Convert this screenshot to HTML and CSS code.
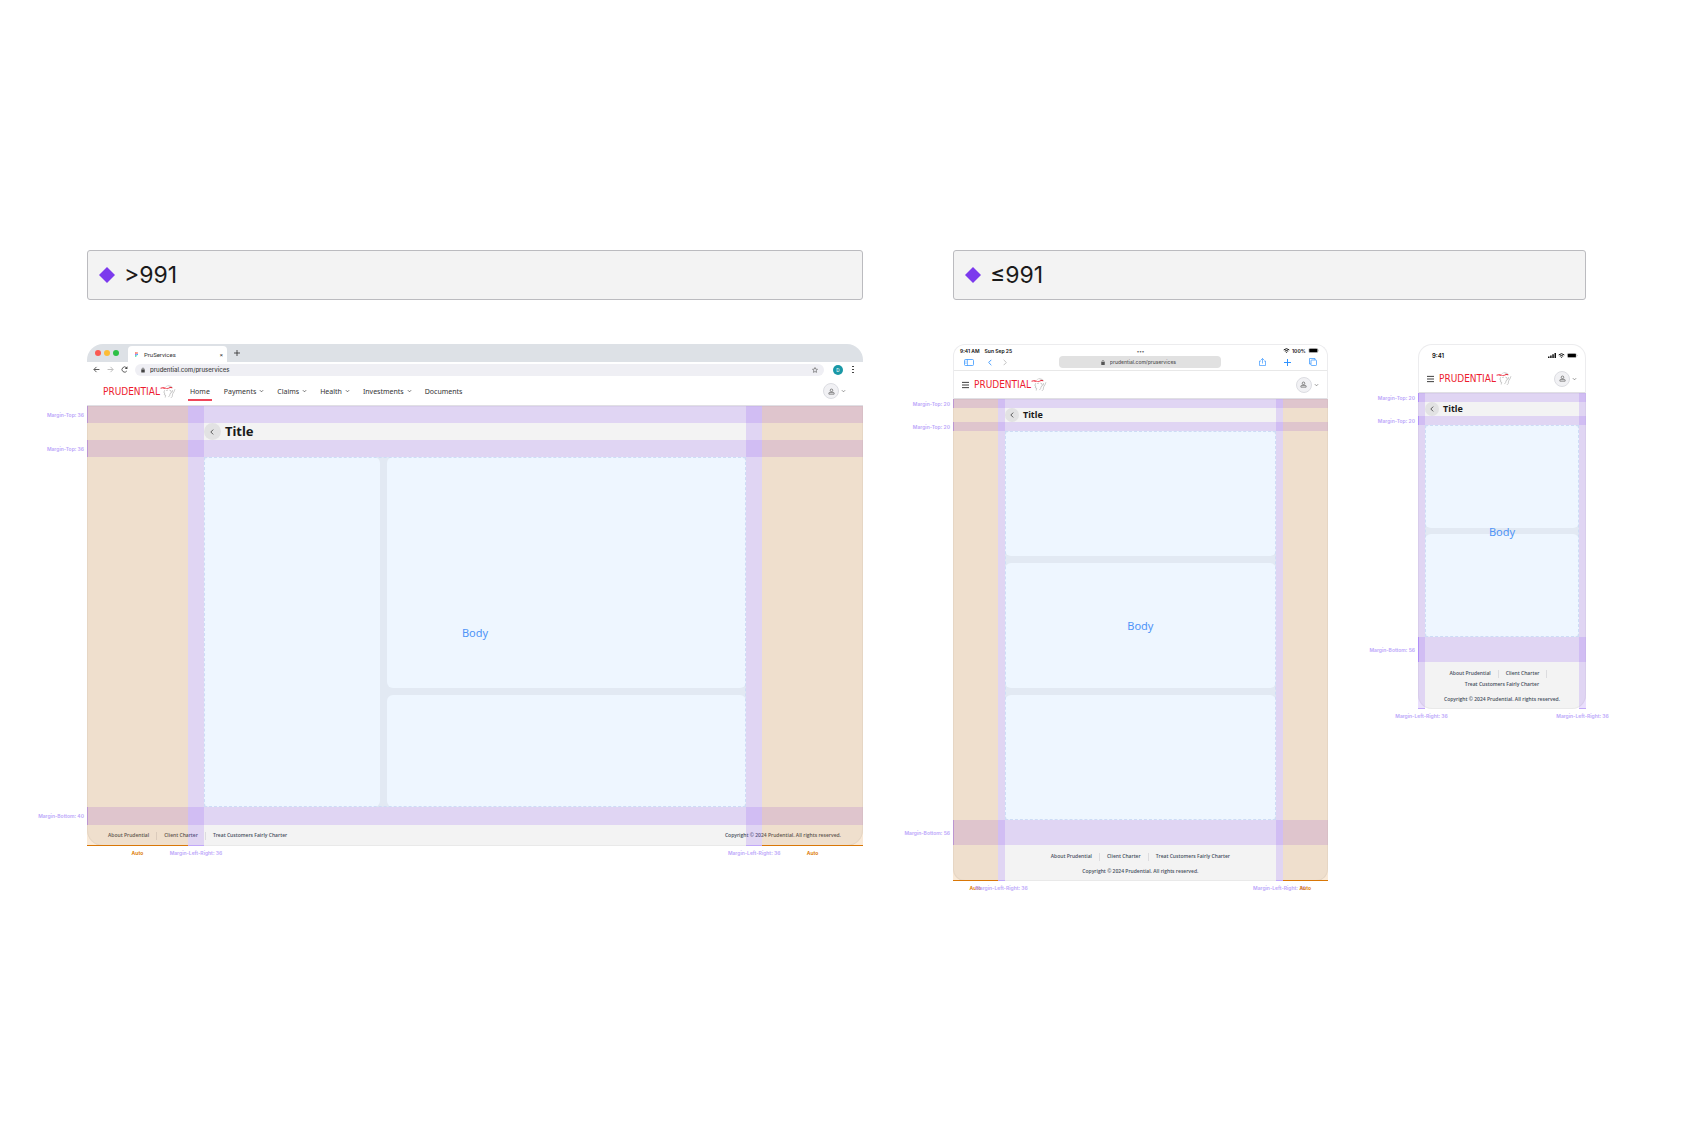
FILE: index.html
```html
<!DOCTYPE html>
<html lang="en">
<head>
  <meta charset="UTF-8">
  <meta name="viewport" content="width=device-width, initial-scale=1.0">
  <title>PruServices page layout</title>
  <link rel="stylesheet" href="styles.css">
</head>
<body>
  <!-- Shared icons -->
  <svg class="sprite" aria-hidden="true">
    <symbol id="chevron" viewBox="0 0 6 4"><path d="M1 1l2 2 2-2" fill="none" stroke="currentColor" stroke-width=".8"/></symbol>
    <symbol id="left" viewBox="0 0 6 10"><path d="M5 1L1 5l4 4" fill="none" stroke="currentColor" stroke-width="1.3"/></symbol>
    <symbol id="arrow" viewBox="0 0 12 12"><path d="M11 6H2M6 1.5L1.5 6 6 10.5" fill="none" stroke="currentColor" stroke-width="1.5"/></symbol>
    <symbol id="lock" viewBox="0 0 8 10"><path d="M2 5V3a2 2 0 0 1 4 0v2" fill="none" stroke="currentColor" stroke-width="1.2"/><rect x=".5" y="4" width="7" height="6" rx="1" fill="currentColor"/></symbol>
    <symbol id="user" viewBox="0 0 12 12"><circle cx="6" cy="4" r="2.2" fill="none" stroke="currentColor" stroke-width="1.3"/><path d="M1.5 10.5V9q0-1.5 1.5-1.5h6q1.5 0 1.5 1.5v1.5z" fill="none" stroke="currentColor" stroke-width="1.3"/></symbol>
    <symbol id="plus" viewBox="0 0 10 10"><path d="M5 0v10M0 5h10" stroke="currentColor" stroke-width="1.4"/></symbol>
    <symbol id="menu" viewBox="0 0 8 8"><path d="M0 1h8M0 4h8M0 7h8" stroke="#222" stroke-width="1"/></symbol>
    <symbol id="wifi" viewBox="0 0 12 9"><path d="M1 3.5q5-4.5 10 0M3 5.8q3-2.6 6 0" fill="none" stroke="#111" stroke-width="1.8"/><path d="M4.5 7.2q1.5-1 3 0L6 9z" fill="#111"/></symbol>
    <symbol id="battery" viewBox="0 0 24 11"><rect x=".5" y=".5" width="20" height="10" rx="3" fill="none" stroke="#999"/><rect x="1.5" y="1.5" width="18" height="8" rx="2" fill="#000"/><path d="M22 4v3q1-.5 1-1.500t-1-1.500" fill="#999"/></symbol>
    <symbol id="signal" viewBox="0 0 16 10"><path d="M0 7h3v3H0zM4.300 5h3v5h-3zM8.600 2.500h3V10h-3zM13 0h3v10h-3z" fill="#111"/></symbol>
    <symbol id="face" viewBox="0 0 32 28">
      <path d="M0 6q6-2 11 0t10-2l4 1v2q-5-1-9 1-6-1-8 0-4-2-8 0z" fill="#ed1b2e"/>
      <path d="M11 4q4-4 9-2 5 0 6 5M17 1l5 4" fill="none" stroke="#a5a5a5" stroke-width=".8"/>
      <path d="M9 11l-2 5 2 1-1 4 3 1-1 5M12 12l4-1M19 11q5 0 4 6-4 1-3 5l-3 4M31 9q-2 7-5 10l-1 6-3 3M26 11l-1 5" fill="none" stroke="#858585" stroke-width=".9"/>
    </symbol>
    <symbol id="figma" viewBox="0 0 8 12"><path d="M4 0H2a2 2 0 0 0 0 4h2z" fill="#f24e1e"/><path d="M4 0h2a2 2 0 0 1 0 4H4z" fill="#ff7262"/><path d="M4 4H2a2 2 0 0 0 0 4h2z" fill="#a259ff"/><circle cx="6" cy="6" r="2" fill="#1abcfe"/><path d="M4 8H2a2 2 0 1 0 2 2z" fill="#0acf83"/></symbol>
  </svg>

  <main class="board">
    <section class="breakpoint">
      <h2 class="breakpoint-label"><span class="diamond"></span>&gt;991</h2>

      <div class="device desktop">
        <div class="window">
          <div class="tabbar">
            <span class="dot red"></span><span class="dot yellow"></span><span class="dot green"></span>
            <div class="tab">
              <svg class="favicon"><use href="#figma"/></svg>
              <span>PruServices</span>
              <button class="tab-close" aria-label="Close tab">×</button>
            </div>
            <button class="new-tab" aria-label="New tab"><svg width="6" height="6"><use href="#plus"/></svg></button>
          </div>
          <div class="toolbar">
            <button aria-label="Back"><svg width="7" height="7"><use href="#arrow"/></svg></button>
            <button class="faded" aria-label="Forward"><svg class="flip" width="7" height="7"><use href="#arrow"/></svg></button>
            <button aria-label="Reload"><svg width="7" height="7" viewBox="0 0 12 12"><path d="M10 8.500A4.500 4.500 0 1 1 9.500 3" fill="none" stroke="currentColor" stroke-width="1.400"/><path d="M11 .5v4.500H6.500z" fill="currentColor"/></svg></button>
            <div class="address">
              <svg width="4" height="6"><use href="#lock"/></svg>
              <input type="text" aria-label="Address" value="prudential.com/pruservices">
              <svg width="6" height="6" viewBox="0 0 12 12"><path d="M6 1l1.500 3.300 3.500.4-2.600 2.400.7 3.600L6 9l-3.100 1.700.7-3.600L1 4.700l3.500-.4z" fill="none" stroke="#555" stroke-width="1.200"/></svg>
            </div>
            <span class="profile">D</span>
            <button aria-label="Menu"><svg width="2" height="7" viewBox="0 0 2 7"><path d="M0 0h2v1H0zM0 3h2v1H0zM0 6h2v1H0z" fill="#444"/></svg></button>
          </div>
          <header class="site-header">
            <a class="logo" href="#">PRUDENTIAL<svg><use href="#face"/></svg></a>
            <nav class="nav">
              <a class="active" href="#">Home</a>
              <a href="#">Payments <svg class="chev"><use href="#chevron"/></svg></a>
              <a href="#">Claims <svg class="chev"><use href="#chevron"/></svg></a>
              <a href="#">Health <svg class="chev"><use href="#chevron"/></svg></a>
              <a href="#">Investments <svg class="chev"><use href="#chevron"/></svg></a>
              <a href="#">Documents</a>
            </nav>
            <button class="account" aria-label="Account"><span class="avatar"><svg><use href="#user"/></svg></span><svg class="chev"><use href="#chevron"/></svg></button>
          </header>
        </div>

        <div class="page">
          <div class="band"><span class="note">Margin-Top: 36</span></div>
          <div class="title-row"><button class="back" aria-label="Back"><svg><use href="#left"/></svg></button><h1>Title</h1></div>
          <div class="band"><span class="note">Margin-Top: 36</span></div>
          <div class="content">
            <div class="cards">
              <div class="card tall"></div>
              <div class="card"></div>
              <div class="card"></div>
              <span class="body-label">Body</span>
            </div>
          </div>
          <div class="band bottom"><span class="note">Margin-Bottom: 40</span></div>
          <footer class="footer">
            <ul>
              <li><a href="#">About Prudential</a></li>
              <li><a href="#">Client Charter</a></li>
              <li><a href="#">Treat Customers Fairly Charter</a></li>
            </ul>
            <p>Copyright © 2024 Prudential. All rights reserved.</p>
          </footer>
          <div class="guides">
            <div class="auto"><span>Auto</span></div>
            <div class="gutter"><span>Margin-Left-Right: 36</span></div>
            <div></div>
            <div class="gutter"><span>Margin-Left-Right: 36</span></div>
            <div class="auto"><span>Auto</span></div>
          </div>
        </div>
      </div>
    </section>

    <section class="breakpoint">
      <h2 class="breakpoint-label"><span class="diamond"></span>≤991</h2>

      <div class="devices">
        <div class="device tablet">
          <div class="window">
            <div class="status">
              <span>9:41 AM</span><span>Sun Sep 25</span>
              <span class="more">•••</span>
              <span class="status-right"><svg width="7" height="5"><use href="#wifi"/></svg>100%<svg width="12" height="5"><use href="#battery"/></svg></span>
            </div>
            <div class="safari">
              <div class="safari-side">
                <button aria-label="Sidebar"><svg width="10" height="7" viewBox="0 0 20 14"><rect x="1" y="1" width="18" height="12" rx="2" fill="none" stroke="currentColor" stroke-width="1.500"/><path d="M7 1v12M3 4h2M3 6.500h2M3 9h2" stroke="currentColor" stroke-width="1.200"/></svg></button>
                <button class="safari-back" aria-label="Back"><svg width="4" height="7"><use href="#left"/></svg></button>
                <button class="faded" aria-label="Forward"><svg class="flip" width="4" height="7"><use href="#left"/></svg></button>
              </div>
              <div class="address">
                <svg width="4" height="5"><use href="#lock"/></svg>
                <input type="text" aria-label="Address" value="prudential.com/pruservices">
              </div>
              <div class="safari-side end">
                <button aria-label="Share"><svg width="7" height="8" viewBox="0 0 14 16"><path d="M4 6H1v9h12V6h-3M7 11V1M4 4l3-3 3 3" fill="none" stroke="currentColor" stroke-width="1.300"/></svg></button>
                <button aria-label="New tab"><svg width="7" height="7"><use href="#plus"/></svg></button>
                <button aria-label="Tabs"><svg width="8" height="8" viewBox="0 0 16 16"><path d="M4 12H1V1h11v3" fill="none" stroke="currentColor" stroke-width="1.400"/><rect x="4" y="4" width="11" height="11" rx="1.500" fill="none" stroke="currentColor" stroke-width="1.400"/></svg></button>
              </div>
            </div>
            <header class="site-header">
              <button class="burger" aria-label="Open menu"><svg><use href="#menu"/></svg></button>
              <a class="logo" href="#">PRUDENTIAL<svg><use href="#face"/></svg></a>
              <button class="account" aria-label="Account"><span class="avatar"><svg><use href="#user"/></svg></span><svg class="chev"><use href="#chevron"/></svg></button>
            </header>
          </div>

          <div class="page">
            <div class="band"><span class="note">Margin-Top: 20</span></div>
            <div class="title-row"><button class="back" aria-label="Back"><svg><use href="#left"/></svg></button><h1>Title</h1></div>
            <div class="band"><span class="note">Margin-Top: 20</span></div>
            <div class="content">
              <div class="cards">
                <div class="card"></div>
                <div class="card"></div>
                <div class="card"></div>
                <span class="body-label">Body</span>
              </div>
            </div>
            <div class="band bottom"><span class="note">Margin-Bottom: 56</span></div>
            <footer class="footer">
              <ul>
                <li><a href="#">About Prudential</a></li>
                <li><a href="#">Client Charter</a></li>
                <li><a href="#">Treat Customers Fairly Charter</a></li>
              </ul>
              <p>Copyright © 2024 Prudential. All rights reserved.</p>
            </footer>
            <div class="guides">
              <div class="auto"><span>Auto</span></div>
              <div class="gutter"><span>Margin-Left-Right: 36</span></div>
              <div></div>
              <div class="gutter"><span>Margin-Left-Right: 36</span></div>
              <div class="auto"><span>Auto</span></div>
            </div>
          </div>
        </div>

        <div class="device phone">
          <div class="window">
            <div class="status">
              <span>9:41</span>
              <span class="status-right"><svg width="8" height="5"><use href="#signal"/></svg><svg width="7" height="5"><use href="#wifi"/></svg><svg width="11" height="5"><use href="#battery"/></svg></span>
            </div>
            <header class="site-header">
              <button class="burger" aria-label="Open menu"><svg><use href="#menu"/></svg></button>
              <a class="logo" href="#">PRUDENTIAL<svg><use href="#face"/></svg></a>
              <button class="account" aria-label="Account"><span class="avatar"><svg><use href="#user"/></svg></span><svg class="chev"><use href="#chevron"/></svg></button>
            </header>
          </div>

          <div class="page">
            <div class="band"><span class="note">Margin-Top: 20</span></div>
            <div class="title-row"><button class="back" aria-label="Back"><svg><use href="#left"/></svg></button><h1>Title</h1></div>
            <div class="band"><span class="note">Margin-Top: 20</span></div>
            <div class="content">
              <div class="cards">
                <div class="card"></div>
                <div class="card"></div>
                <span class="body-label">Body</span>
              </div>
            </div>
            <div class="band bottom"><span class="note">Margin-Bottom: 56</span></div>
            <footer class="footer">
              <ul>
                <li><a href="#">About Prudential</a></li>
                <li><a href="#">Client Charter</a></li>
                <li><a href="#">Treat Customers Fairly Charter</a></li>
              </ul>
              <p>Copyright © 2024 Prudential. All rights reserved.</p>
            </footer>
            <div class="guides">
              <div class="gutter"><span>Margin-Left-Right: 36</span></div>
              <div></div>
              <div class="gutter"><span>Margin-Left-Right: 36</span></div>
            </div>
          </div>
        </div>
      </div>
    </section>
  </main>
</body>
</html>
```

FILE: styles.css
```css
* {
  box-sizing: border-box;
}
body {
  margin: 0;
  background-color: white;
  font-family: "Noto Sans", "Open Sans", sans-serif;
  color: #333;
}
h1, h2, p, ul {
  margin: 0;
  padding: 0;
}
ul {
  list-style: none;
}
a {
  color: inherit;
  text-decoration: none;
}
button {
  display: flex;
  align-items: center;
  justify-content: center;
  padding: 0;
  border: 0;
  background: none;
  color: inherit;
  font: inherit;
}
input {
  min-width: 0;
  padding: 0;
  border: 0;
  background: none;
  color: inherit;
  font: inherit;
}
svg {
  display: block;
  flex: none;
}
.sprite {
  position: absolute;
  width: 0;
  height: 0;
}
.flip {
  transform: scaleX(-1);
}
.faded {
  opacity: 0.4;
}

/* Board */
.board {
  display: grid;
  grid-template-columns: 776fr 633fr;
  gap: 90px;
  align-items: start;
  padding: 250px 114px 200px 87px;
}
.breakpoint-label {
  display: flex;
  align-items: center;
  gap: 9px;
  height: 50px;
  margin-bottom: 44px;
  padding-left: 11px;
  border: 1px solid #bbbbbf;
  border-radius: 3px;
  background-color: #f3f3f3;
  color: #1a1a1a;
  font: 400 23px "Inter", sans-serif;
}
.diamond {
  width: 16px;
  height: 16px;
  background-color: #7c3aed;
  clip-path: polygon(50% 0, 100% 50%, 50% 100%, 0 50%);
}
.devices {
  display: flex;
  align-items: flex-start;
  justify-content: space-between;
}

/* Devices */
.desktop {
  --auto: 13%;
  --gutter: 16px;
  --radius: 16px;
}
.tablet {
  --auto: 12%;
  --gutter: 7px;
  --radius: 12px;
  width: 59.2%;
}
.phone {
  --auto: 0%;
  --gutter: 7px;
  --radius: 14px;
  width: 168px;
}
.window {
  position: relative;
  overflow: hidden;
  border: 1px solid #ececee;
  border-bottom: 0;
  border-radius: var(--radius) var(--radius) 0 0;
  background-color: white;
}
.desktop .window {
  border-width: 0;
}

/* Desktop browser */
.tabbar {
  display: flex;
  align-items: center;
  gap: 3px;
  height: 18px;
  padding-left: 8px;
  background-color: #dde1e6;
}
.dot {
  width: 6px;
  height: 6px;
  border-radius: 50%;
}
.red {
  background-color: #fa5a52;
}
.yellow {
  background-color: #fdbc36;
}
.green {
  background-color: #2dc045;
}
.tab {
  display: flex;
  align-items: center;
  align-self: flex-end;
  gap: 6px;
  width: 99px;
  height: 16px;
  margin-left: 6px;
  padding: 0 4px 0 7px;
  border-radius: 4px 4px 0 0;
  background-color: white;
  font: 6px "Roboto", sans-serif;
}
.favicon {
  width: 3px;
  height: 5px;
}
.tab-close {
  margin-left: auto;
}
.new-tab {
  margin-left: 4px;
}
.toolbar {
  display: flex;
  align-items: center;
  gap: 7px;
  height: 15px;
  padding: 0 9px 0 6px;
  color: #444;
}
.address {
  display: flex;
  align-items: center;
  font: 500 6px "Inter", sans-serif;
}
.desktop .address {
  flex: 1;
  gap: 5px;
  height: 12px;
  padding: 0 6px;
  border-radius: 6px;
  background-color: #efeff4;
}
.desktop .address input {
  flex: 1;
}
.profile {
  width: 10px;
  height: 10px;
  margin: 0 2px;
  border-radius: 50%;
  background-color: #1a98a6;
  color: white;
  font: 5px/10px "Roboto", sans-serif;
  text-align: center;
}

/* Tablet and phone bars */
.status {
  display: flex;
  align-items: center;
  gap: 5px;
  color: #111;
  font: 600 5px "Inter", sans-serif;
}
.tablet .status {
  height: 11px;
  padding: 0 7px 0 6px;
}
.phone .status {
  height: 20px;
  padding: 0 7px 0 13px;
  font-size: 6px;
}
.more {
  flex: 1;
  margin-right: 14px;
  color: #666;
  text-align: center;
}
.status-right {
  display: flex;
  align-items: center;
  gap: 2px;
  margin-left: auto;
}
.safari {
  display: flex;
  align-items: center;
  justify-content: space-between;
  height: 15px;
  padding: 0 10px 2px;
  border-bottom: 1px solid #e8e8e8;
}
.safari-side {
  display: flex;
  align-items: center;
  width: 90px;
  color: #2b90ff;
}
.safari-back {
  margin: 0 11px 0 14px;
}
.safari .faded {
  color: #555;
}
.safari-side.end {
  gap: 18px;
  justify-content: flex-end;
}
.tablet .address {
  justify-content: center;
  gap: 5px;
  width: 46%;
  height: 12px;
  border-radius: 4px;
  background-color: #e1e1e1;
  color: #555;
  font-size: 5px;
}
.tablet .address input {
  width: 70px;
}

/* Site header */
.site-header {
  display: flex;
  align-items: center;
  height: 29px;
  border-bottom: 1px solid #e0dfe4;
  background-color: white;
}
.desktop .site-header {
  padding: 0 17px 0 16px;
}
.tablet .site-header,
.phone .site-header {
  height: 28px;
  padding: 0 8px;
}
.burger {
  margin-right: 5px;
}
.burger svg {
  width: 7px;
  height: 8px;
}
.logo {
  display: flex;
  align-items: center;
  color: #ed1b2e;
  font: 10px "DejaVu Sans Condensed", "Lato", sans-serif;
}
.logo svg {
  width: 16px;
  height: 13px;
}
.nav {
  display: flex;
  align-self: stretch;
  gap: 13px;
  margin-left: 12px;
  font-size: 7px;
}
.nav a {
  display: flex;
  align-items: center;
  gap: 3px;
}
.nav .active {
  margin: 4px -1px 4px 0;
  padding: 2px 2px 0;
  border-bottom: 2px solid #f0465a;
}
.chev {
  width: 5px;
  height: 4px;
}
.account {
  gap: 2px;
  margin-left: auto;
  color: #666;
}
.avatar {
  display: flex;
  align-items: center;
  justify-content: center;
  width: 16px;
  height: 16px;
  border: 1px solid #dcdde2;
  border-radius: 50%;
  background-color: #f1f1f4;
}
.avatar svg {
  width: 7px;
  height: 7px;
}

/* Page area */
.page {
  position: relative;
  border-radius: 0 0 var(--radius) var(--radius);
  background-color: #f3f3f3;
  box-shadow: inset 0 0 0 1px #e9e9e9;
}
.band {
  display: flex;
  position: relative;
  align-items: center;
  height: 9px;
  border-left: 1px solid #b79cf8;
  background-color: rgba(151, 96, 247, 0.2);
}
.desktop .band {
  height: 17px;
}
.band.bottom {
  height: 25px;
}
.desktop .band.bottom {
  height: 18px;
}
.note,
.guides span {
  color: #bba6fa;
  font: 600 5px/6px "Inter", sans-serif;
  white-space: nowrap;
}
.note {
  position: absolute;
  right: 100%;
  margin-right: 4px;
}
.title-row {
  display: flex;
  align-items: center;
  gap: 4px;
  height: 14px;
  padding: 0 calc(var(--auto) + var(--gutter));
}
.title-row h1 {
  color: #1a1a1a;
  font-size: 9px;
  line-height: 14px;
}
.back {
  width: 14px;
  height: 14px;
  border-radius: 50%;
  background-color: #e2e2e3;
}
.back svg {
  width: 4px;
  height: 6px;
}
.desktop .title-row {
  height: 17px;
}
.desktop .title-row h1 {
  font-size: 13px;
  line-height: 17px;
}
.desktop .back {
  width: 17px;
  height: 17px;
}

/* Body cards */
.content {
  padding: 0 calc(var(--auto) + var(--gutter));
}
.cards {
  display: grid;
  position: relative;
  grid-auto-rows: 125px;
  gap: 7px;
  background-color: #e2e9f3;
}
.cards::after {
  content: "";
  position: absolute;
  inset: 0;
  border: 1px dashed #cddcf6;
}
.desktop .cards {
  grid-template-columns: 176fr 359fr;
  grid-template-rows: 231px 112px;
}
.phone .cards {
  grid-auto-rows: 103px;
  gap: 6px;
}
.card {
  border-radius: 6px;
  background-color: #eef6ff;
}
.tall {
  grid-row: span 2;
}
.body-label {
  position: absolute;
  inset: 0;
  display: flex;
  align-items: center;
  justify-content: center;
  color: #4f94f7;
  font-size: 11px;
}

/* Footer */
.footer {
  display: flex;
  flex-direction: column;
  align-items: center;
  gap: 4px;
  padding: 6px 16px 4px;
  color: #475060;
  font: 600 5px/11px "Open Sans", sans-serif;
}
.footer ul {
  display: flex;
  flex-wrap: wrap;
  justify-content: center;
}
.footer li {
  display: flex;
  align-items: center;
}
.footer li:not(:last-child)::after {
  content: "";
  width: 1px;
  height: 8px;
  margin: 0 7px;
  background-color: #dcdcdf;
}
.desktop .footer {
  flex-direction: row;
  justify-content: space-between;
  padding: 5px 22px 5px 21px;
}

/* Margin guides drawn over the page */
.guides {
  display: grid;
  position: absolute;
  inset: 0;
  grid-template-columns: var(--auto) var(--gutter) 1fr var(--gutter) var(--auto);
  pointer-events: none;
}
.phone .guides {
  grid-template-columns: var(--gutter) 1fr var(--gutter);
}
.auto,
.gutter {
  display: flex;
  position: relative;
  justify-content: center;
}
.auto {
  border-bottom: 1px solid #d97706;
  background-color: rgba(217, 119, 6, 0.16);
}
.gutter {
  border-bottom: 1px solid #c1a8f8;
  background-color: rgba(151, 96, 247, 0.2);
}
.guides span {
  position: absolute;
  top: 100%;
  margin-top: 5px;
}
.guides .auto span {
  color: #de7f10;
  font-weight: 700;
}
```
